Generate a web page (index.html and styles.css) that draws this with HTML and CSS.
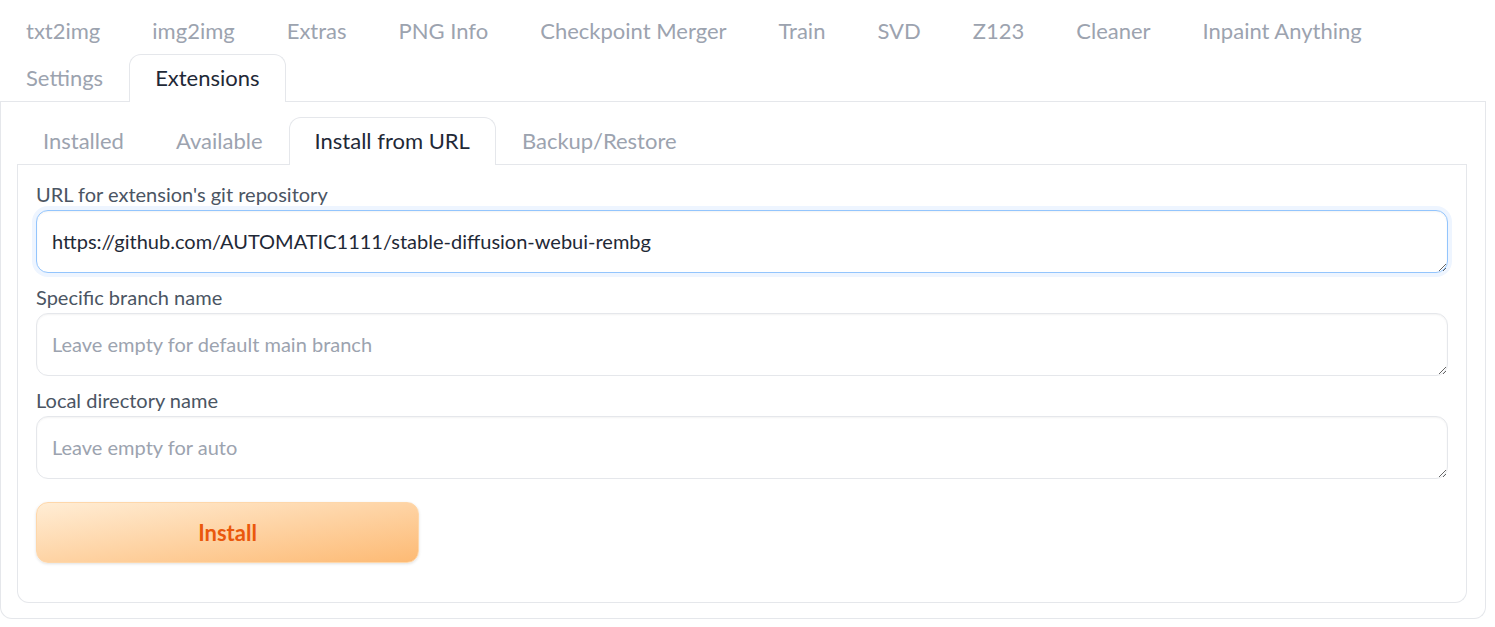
FILE: index.html
```html
<!DOCTYPE html>
<html lang="en">
<head>
<meta charset="utf-8">
<title>Extensions</title>
<link rel="stylesheet" href="styles.css">
</head>
<body>
<div class="app">
  <div class="tab-nav top-nav">
    <button class="tab">txt2img</button>
    <button class="tab">img2img</button>
    <button class="tab">Extras</button>
    <button class="tab">PNG Info</button>
    <button class="tab">Checkpoint Merger</button>
    <button class="tab">Train</button>
    <button class="tab">SVD</button>
    <button class="tab">Z123</button>
    <button class="tab">Cleaner</button>
    <button class="tab">Inpaint Anything</button>
    <button class="tab">Settings</button>
    <button class="tab selected">Extensions</button>
  </div>
  <div class="tab-panel outer-panel">
    <div class="tab-nav">
      <button class="tab">Installed</button>
      <button class="tab">Available</button>
      <button class="tab selected">Install from URL</button>
      <button class="tab">Backup/Restore</button>
    </div>
    <div class="tab-panel inner-panel">
      <label class="field">
        <span class="field-label">URL for extension's git repository</span>
        <textarea class="input focused" rows="1">https://github.com/AUTOMATIC1111/stable-diffusion-webui-rembg</textarea>
      </label>
      <label class="field">
        <span class="field-label">Specific branch name</span>
        <textarea class="input" rows="1" placeholder="Leave empty for default main branch"></textarea>
      </label>
      <label class="field">
        <span class="field-label">Local directory name</span>
        <textarea class="input" rows="1" placeholder="Leave empty for auto"></textarea>
      </label>
      <button class="primary-btn">Install</button>
    </div>
  </div>
</div>
</body>
</html>
```
FILE: styles.css
```css
* { box-sizing: border-box; }
body {
  margin: 0;
  background: #ffffff;
  font-family: "Lato", "Open Sans", sans-serif;
}
.app {
  width: 1486px;
}
.tab-nav {
  display: flex;
  flex-wrap: wrap;
  border-bottom: 1px solid #e5e7eb;
}
.top-nav {
  padding-top: 7px;
}
.tab {
  height: 48px;
  padding: 0 25px 3px;
  margin-bottom: -1px;
  border: 1px solid transparent;
  border-bottom: none;
  border-radius: 12px 12px 0 0;
  background: transparent;
  font-family: inherit;
  font-size: 22px;
  color: #9ca3af;
  cursor: pointer;
}
.tab.selected {
  background: #ffffff;
  border-color: #e5e7eb;
  color: #1f2937;
}
.outer-panel {
  border: 1px solid #e5e7eb;
  border-top: none;
  border-radius: 0 0 12px 12px;
  padding: 15px 18px 15px 16px;
}
.inner-panel {
  border: 1px solid #e5e7eb;
  border-top: none;
  border-radius: 0 0 12px 12px;
  padding: 16px 18px 39px 18px;
  display: flex;
  flex-direction: column;
}
.field {
  display: flex;
  flex-direction: column;
  margin-bottom: 11px;
}
.field-label {
  font-size: 20px;
  line-height: 27px;
  color: #4b5563;
  margin-bottom: 2px;
}
.input {
  height: 63px;
  width: 100%;
  padding: 15px 15px;
  border: 1px solid #e5e7eb;
  border-radius: 12px;
  font-family: inherit;
  font-size: 20px;
  line-height: 30px;
  color: #1f2937;
  background: #ffffff;
  box-shadow: inset 0 1px 2px rgba(0,0,0,0.05);
  resize: vertical;
  outline: none;
  overflow: hidden;
}
.input::placeholder {
  color: #9ca3af;
}
.input.focused {
  border-color: #93c5fd;
  box-shadow: 0 0 0 4px #eef5ff, inset 0 1px 2px rgba(0,0,0,0.05);
}
.primary-btn {
  margin-top: 12px;
  width: 383px;
  height: 61px;
  padding-bottom: 2px;
  border: 1px solid #fed7aa;
  border-radius: 12px;
  background: linear-gradient(to bottom right, #ffedd5, #fdba74);
  box-shadow: 0 1px 3px rgba(0,0,0,0.12);
  color: #ea580c;
  font-family: inherit;
  font-size: 22px;
  font-weight: 700;
  cursor: pointer;
}
```
